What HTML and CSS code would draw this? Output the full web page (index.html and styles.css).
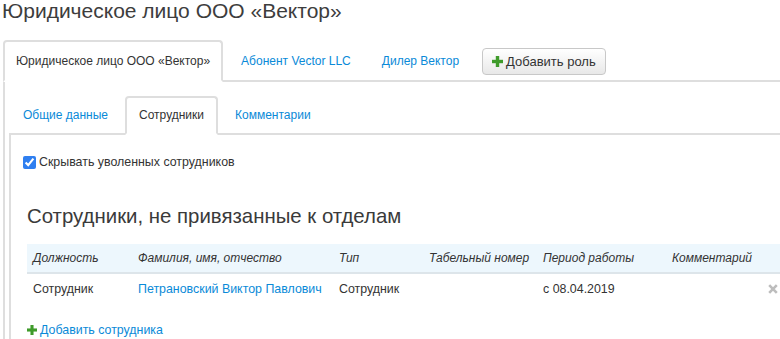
FILE: index.html
```html
<!DOCTYPE html>
<html lang="ru">

<head>
  <meta charset="UTF-8">
  <meta name="viewport" content="width=device-width, initial-scale=1.0">
  <title>Юридическое лицо ООО «Вектор»</title>
  <link rel="stylesheet" href="styles.css">
</head>

<body>
  <h1 class="title">Юридическое лицо ООО «Вектор»</h1>

  <div class="roles">
    <ul class="tabs tabs-outer">
      <li class="active"><a href="#">Юридическое лицо ООО «Вектор»</a></li>
      <li><a href="#">Абонент Vector LLC</a></li>
      <li><a href="#">Дилер Вектор</a></li>
      <li class="tab-btn">
        <button class="btn">
          <svg class="plus" width="11" height="11" viewBox="0 0 11 11"><rect x="3.8" y="0" width="3.4" height="11"/><rect x="0" y="3.8" width="11" height="3.4"/></svg>
          Добавить роль
        </button>
      </li>
    </ul>

    <div class="pane pane-outer">
      <ul class="tabs tabs-inner">
        <li><a href="#">Общие данные</a></li>
        <li class="active"><a href="#">Сотрудники</a></li>
        <li><a href="#">Комментарии</a></li>
      </ul>

      <div class="pane pane-inner">
        <label class="check">
          <input type="checkbox" checked>
          Скрывать уволенных сотрудников
        </label>

        <div class="section">
          <h2>Сотрудники, не привязанные к отделам</h2>
          <table class="staff">
            <colgroup>
              <col style="width: 105px">
              <col style="width: 201px">
              <col style="width: 90px">
              <col style="width: 114px">
              <col style="width: 129px">
              <col style="width: 96px">
              <col>
            </colgroup>
            <thead>
              <tr>
                <th>Должность</th>
                <th>Фамилия, имя, отчество</th>
                <th>Тип</th>
                <th>Табельный номер</th>
                <th>Период работы</th>
                <th>Комментарий</th>
                <th></th>
              </tr>
            </thead>
            <tbody>
              <tr>
                <td>Сотрудник</td>
                <td><a href="#">Петрановский Виктор Павлович</a></td>
                <td>Сотрудник</td>
                <td></td>
                <td>с 08.04.2019</td>
                <td></td>
                <td class="remove">
                  <svg width="10" height="10" viewBox="0 0 10 10"><path d="M1.2 1.2 L8.8 8.8 M8.8 1.2 L1.2 8.8" stroke="#bdbdbd" stroke-width="2.6"/></svg>
                </td>
              </tr>
            </tbody>
          </table>

          <a href="#" class="add-link">
            <svg class="plus" width="10" height="10" viewBox="0 0 11 11"><rect x="3.8" y="0" width="3.4" height="11"/><rect x="0" y="3.8" width="11" height="3.4"/></svg>
            Добавить сотрудника
          </a>
        </div>
      </div>
    </div>
  </div>
</body>

</html>
```

FILE: styles.css
```css
* {
  margin: 0;
  padding: 0;
  box-sizing: border-box;
}

html,
body {
  font-family: "Liberation Sans", Arial, sans-serif;
  font-size: 12px;
  color: #333;
  background: #fff;
  overflow: hidden;
}

a {
  color: #0a8ad8;
  text-decoration: none;
}

.title {
  font-size: 21px;
  line-height: 22px;
  font-weight: normal;
  color: #3d3d3d;
  padding-left: 2px;
}

.roles {
  margin-top: 18px;
  margin-left: 3px;
}

.tabs {
  list-style: none;
  display: flex;
  align-items: flex-end;
  border-bottom: 2px solid #dedede;
}

.tabs li {
  margin-bottom: -2px;
  margin-right: 5px;
}

.tabs li a {
  display: block;
  border: 2px solid transparent;
  border-radius: 4px 4px 0 0;
}

.tabs li.active a {
  color: #333;
  background: #fff;
  border-color: #dedede;
  border-bottom-color: #fff;
}

.tabs-outer li a {
  height: 42px;
  line-height: 38px;
  padding: 0 11px;
}

.tabs-outer .tab-btn {
  align-self: center;
  margin: 0 0 0 5px;
  padding-top: 2px;
}

.btn {
  display: flex;
  align-items: center;
  gap: 3px;
  height: 27px;
  padding: 0 9px 0 9px;
  font-family: inherit;
  font-size: 13px;
  color: #333;
  border: 1px solid #c8c8c8;
  border-radius: 4px;
  background: linear-gradient(#fff, #e8e8e8);
}

.plus {
  fill: #3f9b2b;
}

.pane {
  border-left: 2px solid #dedede;
}

.pane-outer {
  padding: 14px 0 0 4px;
  min-height: 260px;
}

.tabs-inner li {
  margin-right: 3px;
}

.tabs-inner li a {
  height: 39px;
  line-height: 35px;
  padding: 0 12px;
}

.pane-inner {
  padding: 20px 0 0 12px;
  min-height: 220px;
  font-size: 12.4px;
}

.check {
  display: flex;
  align-items: center;
  gap: 3px;
  height: 14px;
}

.check input {
  width: 13px;
  height: 13px;
  margin: 0;
  accent-color: #2f7ff0;
}

.section {
  padding-left: 4px;
}

.section h2 {
  font-size: 20.4px;
  font-weight: normal;
  line-height: 24px;
  color: #3a3a3a;
  margin: 35px 0 16px;
}

.staff {
  width: 100%;
  border-collapse: collapse;
  table-layout: fixed;
}

.staff th {
  font-style: italic;
  font-weight: normal;
  text-align: left;
  font-size: 12px;
  background: #edf7fd;
  height: 29px;
  padding: 0 6px;
  border-bottom: 2px solid #dde5ea;
}

.staff td {
  height: 30px;
  padding: 0 6px;
}

.staff td.remove {
  padding-left: 6px;
  line-height: 0;
}

.add-link {
  display: inline-flex;
  align-items: center;
  gap: 3px;
  margin-top: 20px;
}
```
